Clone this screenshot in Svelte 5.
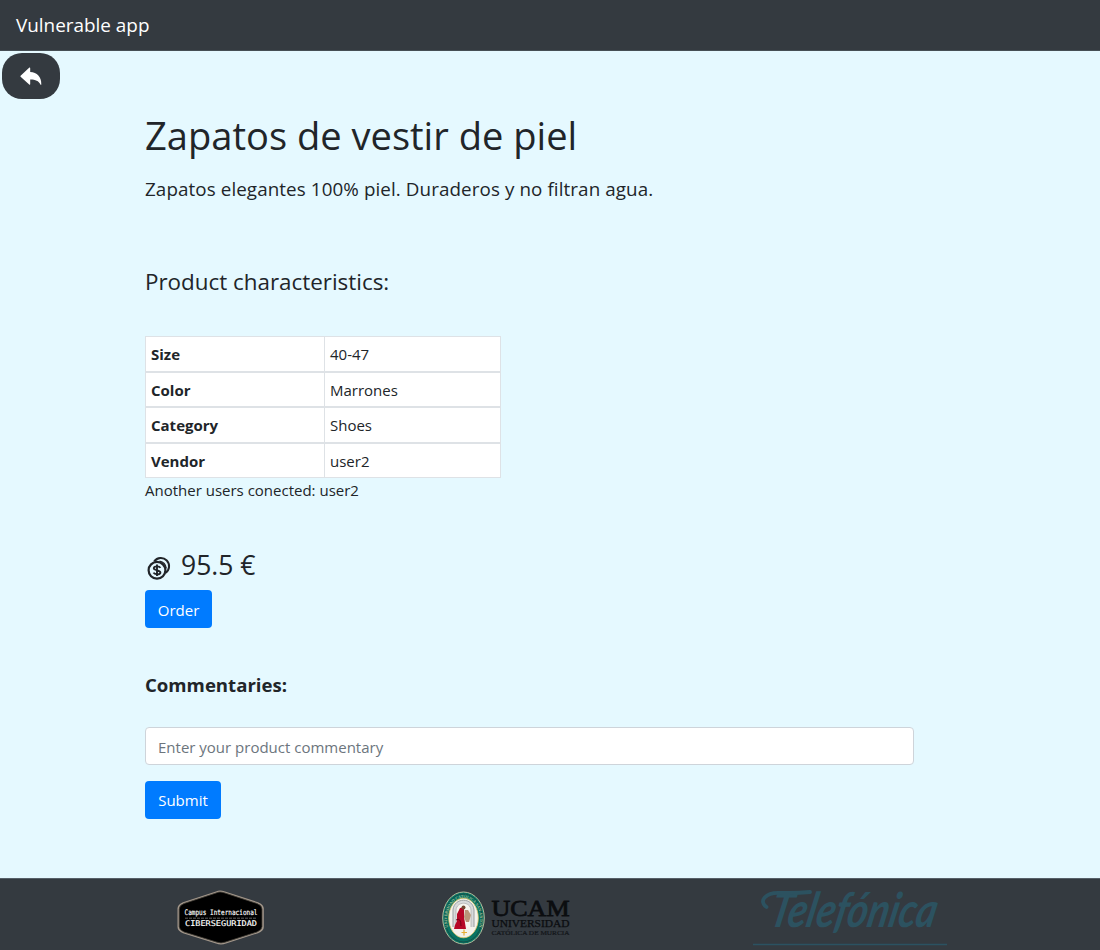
<script>
  const rows = [
    ['Size', '40-47'],
    ['Color', 'Marrones'],
    ['Category', 'Shoes'],
    ['Vendor', 'user2']
  ];
</script>

<div class="page">
  <nav><span class="brand">Vulnerable app</span></nav>
  <button class="back" aria-label="Back">
    <svg width="22" height="20" viewBox="0 0 22 20"><path d="M0.6 8.8 9.4.5Q10.2.2 10.2 1.2V5C17 5.2 21.5 9.8 21.3 17.2Q21.2 18.6 20.5 17.4C18.5 13.8 15.8 12.4 10.2 12.4V17Q10.2 18.1 9.2 17.4L.6 9.8Q.1 9.3.6 8.8Z" fill="#fff" /></svg>
  </button>
  <main>
    <h1>Zapatos de vestir de piel</h1>
    <p class="lead">Zapatos elegantes 100% piel. Duraderos y no filtran agua.</p>
    <h2>Product characteristics:</h2>
    <table>
      <tbody>
        {#each rows as [name, value]}
          <tr><th>{name}</th><td>{value}</td></tr>
        {/each}
      </tbody>
    </table>
    <p class="users">Another users conected: user2</p>
    <div class="price">
      <svg width="25" height="25" viewBox="0 0 25 25" fill="none" stroke="#212529">
        <path d="M7.2 5.4A8.2 8.2 0 1 1 18.4 17" stroke-width="2" />
        <path d="M12.5 5.1A8.5 8.5 0 0 1 19.3 12.4" stroke-width="1.2" />
        <circle cx="10" cy="14.3" r="8.4" stroke-width="2.2" />
        <path d="M13.4 11.8C12.4 9.8 6.8 9.9 6.8 12.3S13.4 13.9 13.4 16.4 7.6 18.9 6.5 16.7M10 8.5V20.1" stroke-width="1.9" />
      </svg>
      <span>95.5 €</span>
    </div>
    <button class="btn order">Order</button>
    <h3>Commentaries:</h3>
    <input type="text" placeholder="Enter your product commentary" />
    <button class="btn submit">Submit</button>
  </main>
  <footer>
    <svg class="campus" width="90" height="56" viewBox="0 0 90 56">
      <path d="M44 .5Q46 .5 49 1.5L82 12.2Q87.8 14.5 87.8 18.5V37Q87.8 41 82 43.2L50 53.6Q45 55.5 40 53.6L7 43.2Q1.5 41 1.5 37V18.5Q1.5 14.5 7 12.2L40 1.5Q42 .5 44 .5Z" fill="#a3978b" />
      <path d="M44 2Q46 2 49 3L81 13.5Q86 15.4 86 19V36.6Q86 40 81 42L49 52.2Q45 53.6 41 52.2L8 42Q3.2 40 3.2 36.6V19Q3.2 15.4 8 13.5L40 3Q42 2 44 2Z" fill="#000" stroke="#444038" stroke-width=".8" />
      <text x="8.5" y="25" textLength="73" lengthAdjust="spacingAndGlyphs" font-size="7.6">Campus Internacional</text>
      <path d="M9 28.2H81" stroke="#888" stroke-width=".7" stroke-dasharray="3 1" />
      <text x="9" y="36.2" textLength="72" lengthAdjust="spacingAndGlyphs" font-size="7.8">CIBERSEGURIDAD</text>
    </svg>
    <svg class="ucam" width="130" height="56" viewBox="0 0 130 56">
      <defs><path id="seal" d="M6 37A16.5 21.7 0 1 1 37 37" /></defs>
      <ellipse cx="21.5" cy="28" rx="20.8" ry="26" fill="#087363" stroke="#b6bd9d" />
      <ellipse cx="21.5" cy="28" rx="18.7" ry="24" fill="none" stroke="#183f3b" stroke-width=".7" />
      <text font-family="Liberation Serif, serif" font-size="4.2" fill="#d4d1a2"><textPath href="#seal">UNIVERSIDAD CATÓLICA SAN ANTONIO</textPath></text>
      <ellipse cx="21.5" cy="28" rx="14.8" ry="19.8" fill="#f4f2ec" stroke="#dfc768" stroke-width=".8" />
      <path d="M11 37V20C12 7 31 7 32 20V37" fill="#d8dadb" stroke="#9ba1a2" />
      <path d="M14 37V20C15 11 28 11 29 20V37" fill="#f6f5ef" stroke="#aaa" stroke-width=".7" />
      <path d="M18 18Q23 16 22 22L22 27 24 39H12L13 35 15 31V24Z" fill="#b60826" />
      <circle cx="21.5" cy="17.5" r="2" fill="#734832" />
      <path d="M23 20 26 20 29 25 27 32 24 32 22 27Z" fill="#b99778" />
      <path d="M14 30Q19 27 19 36" fill="none" stroke="#760016" />
      <path d="M22 39.5V45.5M19.5 42.5H25" stroke="#e7ae35" stroke-width="1.2" />
      <g font-family="Liberation Serif, serif" fill="#0b0d10">
        <text x="49.5" y="25.5" font-size="24" textLength="78" lengthAdjust="spacingAndGlyphs" stroke="#0b0d10" stroke-width=".8">UCAM</text>
        <text x="49.5" y="37" font-size="10" textLength="78" lengthAdjust="spacingAndGlyphs" stroke="#0b0d10" stroke-width=".25">UNIVERSIDAD</text>
        <text x="49.5" y="45.3" font-size="6.2" textLength="78" lengthAdjust="spacingAndGlyphs" stroke="#0b0d10" stroke-width=".2" opacity=".8">CATÓLICA DE MURCIA</text>
      </g>
    </svg>
    <svg class="telefonica" width="200" height="60" viewBox="0 0 200 60">
      <text transform="translate(18 38) skewX(-12)" font-family="Lato, sans-serif" font-style="italic" font-weight="700" font-size="48" fill="#2c5260" textLength="166" lengthAdjust="spacingAndGlyphs">Telefónica</text>
      <path d="M16.5 18C8 12 16 3.5 29 3.8Q44 4.5 60 3" fill="none" stroke="#2c5260" stroke-width="3.8" stroke-linecap="round" />
      <path d="M3 55.5H197" stroke="#2b5261" stroke-width="1.3" />
    </svg>
  </footer>
</div>

<style>
  :global(body) { margin: 0; overflow: hidden; }
  * { box-sizing: border-box; }
  .page { height: 950px; display: flex; flex-direction: column; background: #e5f9ff; color: #212529; font-family: "Open Sans", "Noto Sans", sans-serif; font-size: 15px; }
  nav { height: 51px; flex: none; background: #343a40; border-bottom: 1px solid #464f55; color: #fff; padding: 0 16px; display: flex; align-items: center; }
  .brand { font-size: 18.9px; line-height: 26px; }
  button { border: 0; font-family: inherit; }
  .back { width: 58px; height: 46px; margin: 2px 0 0 2px; border-radius: 20px; background: #343a40; display: flex; align-items: center; justify-content: center; flex: none; padding: 2px 0 0; }
  main { width: 769px; margin-left: 145px; flex: 1; display: flex; flex-direction: column; align-items: flex-start; }
  h1 { font-size: 38.1px; font-weight: 400; line-height: 48px; margin: 12px 0 0; white-space: nowrap; }
  .lead { font-size: 18.8px; letter-spacing: .1px; line-height: 30px; margin: 15px 0 0; white-space: nowrap; }
  h2 { font-size: 22.4px; font-weight: 400; line-height: 30px; margin: 63px 0 0; }
  table { width: 356px; margin: 39px 0 0; border-collapse: separate; border-spacing: 0; background: #fff; border-right: 1px solid #dee2e6; table-layout: fixed; }
  th, td { height: 35.5px; padding: 1px 5px 0; border: 1px solid #dee2e6; border-right: 0; text-align: left; line-height: 24px; font-size: 15px; }
  th { width: 179px; font-weight: 700; }
  .users { margin: 0 0 1px; line-height: 24px; }
  .price { display: flex; align-items: center; height: 36px; margin-top: 45px; font-size: 26.5px; gap: 9px; }
  .price svg { margin: 5px 0 0 2px; }
  .price span { margin-top: -2px; }
  .btn { height: 38px; border-radius: 4px; background: #007bff; color: #fff; font-size: 15px; padding: 2px 0 0; }
  .order { width: 67px; margin-top: 6px; }
  h3 { font-size: 18.6px; font-weight: 700; line-height: 28px; margin: 43px 0 0; }
  input { width: 769px; height: 38px; margin: 28px 0 0; border: 1px solid #ced4da; border-radius: 4px; background: #fff; padding: 1px 12px 0; font-family: inherit; font-size: 15px; }
  input::placeholder { color: #6c757d; opacity: 1; }
  .submit { width: 76px; margin-top: 15.5px; padding-top: 1px; }
  footer { height: 72px; flex: none; background: #343a40; border-top: 1px solid #566068; display: flex; align-items: flex-start; padding: 11px 0 0 176px; }
  footer svg { flex: none; overflow: visible; }
  .campus text { font-family: "DejaVu Sans Mono", monospace; fill: #fff; stroke: #fff; stroke-width: .15px; }
  .ucam { margin-left: 176px; }
  .telefonica { margin-left: 178px; margin-top: -1px; }
</style>
